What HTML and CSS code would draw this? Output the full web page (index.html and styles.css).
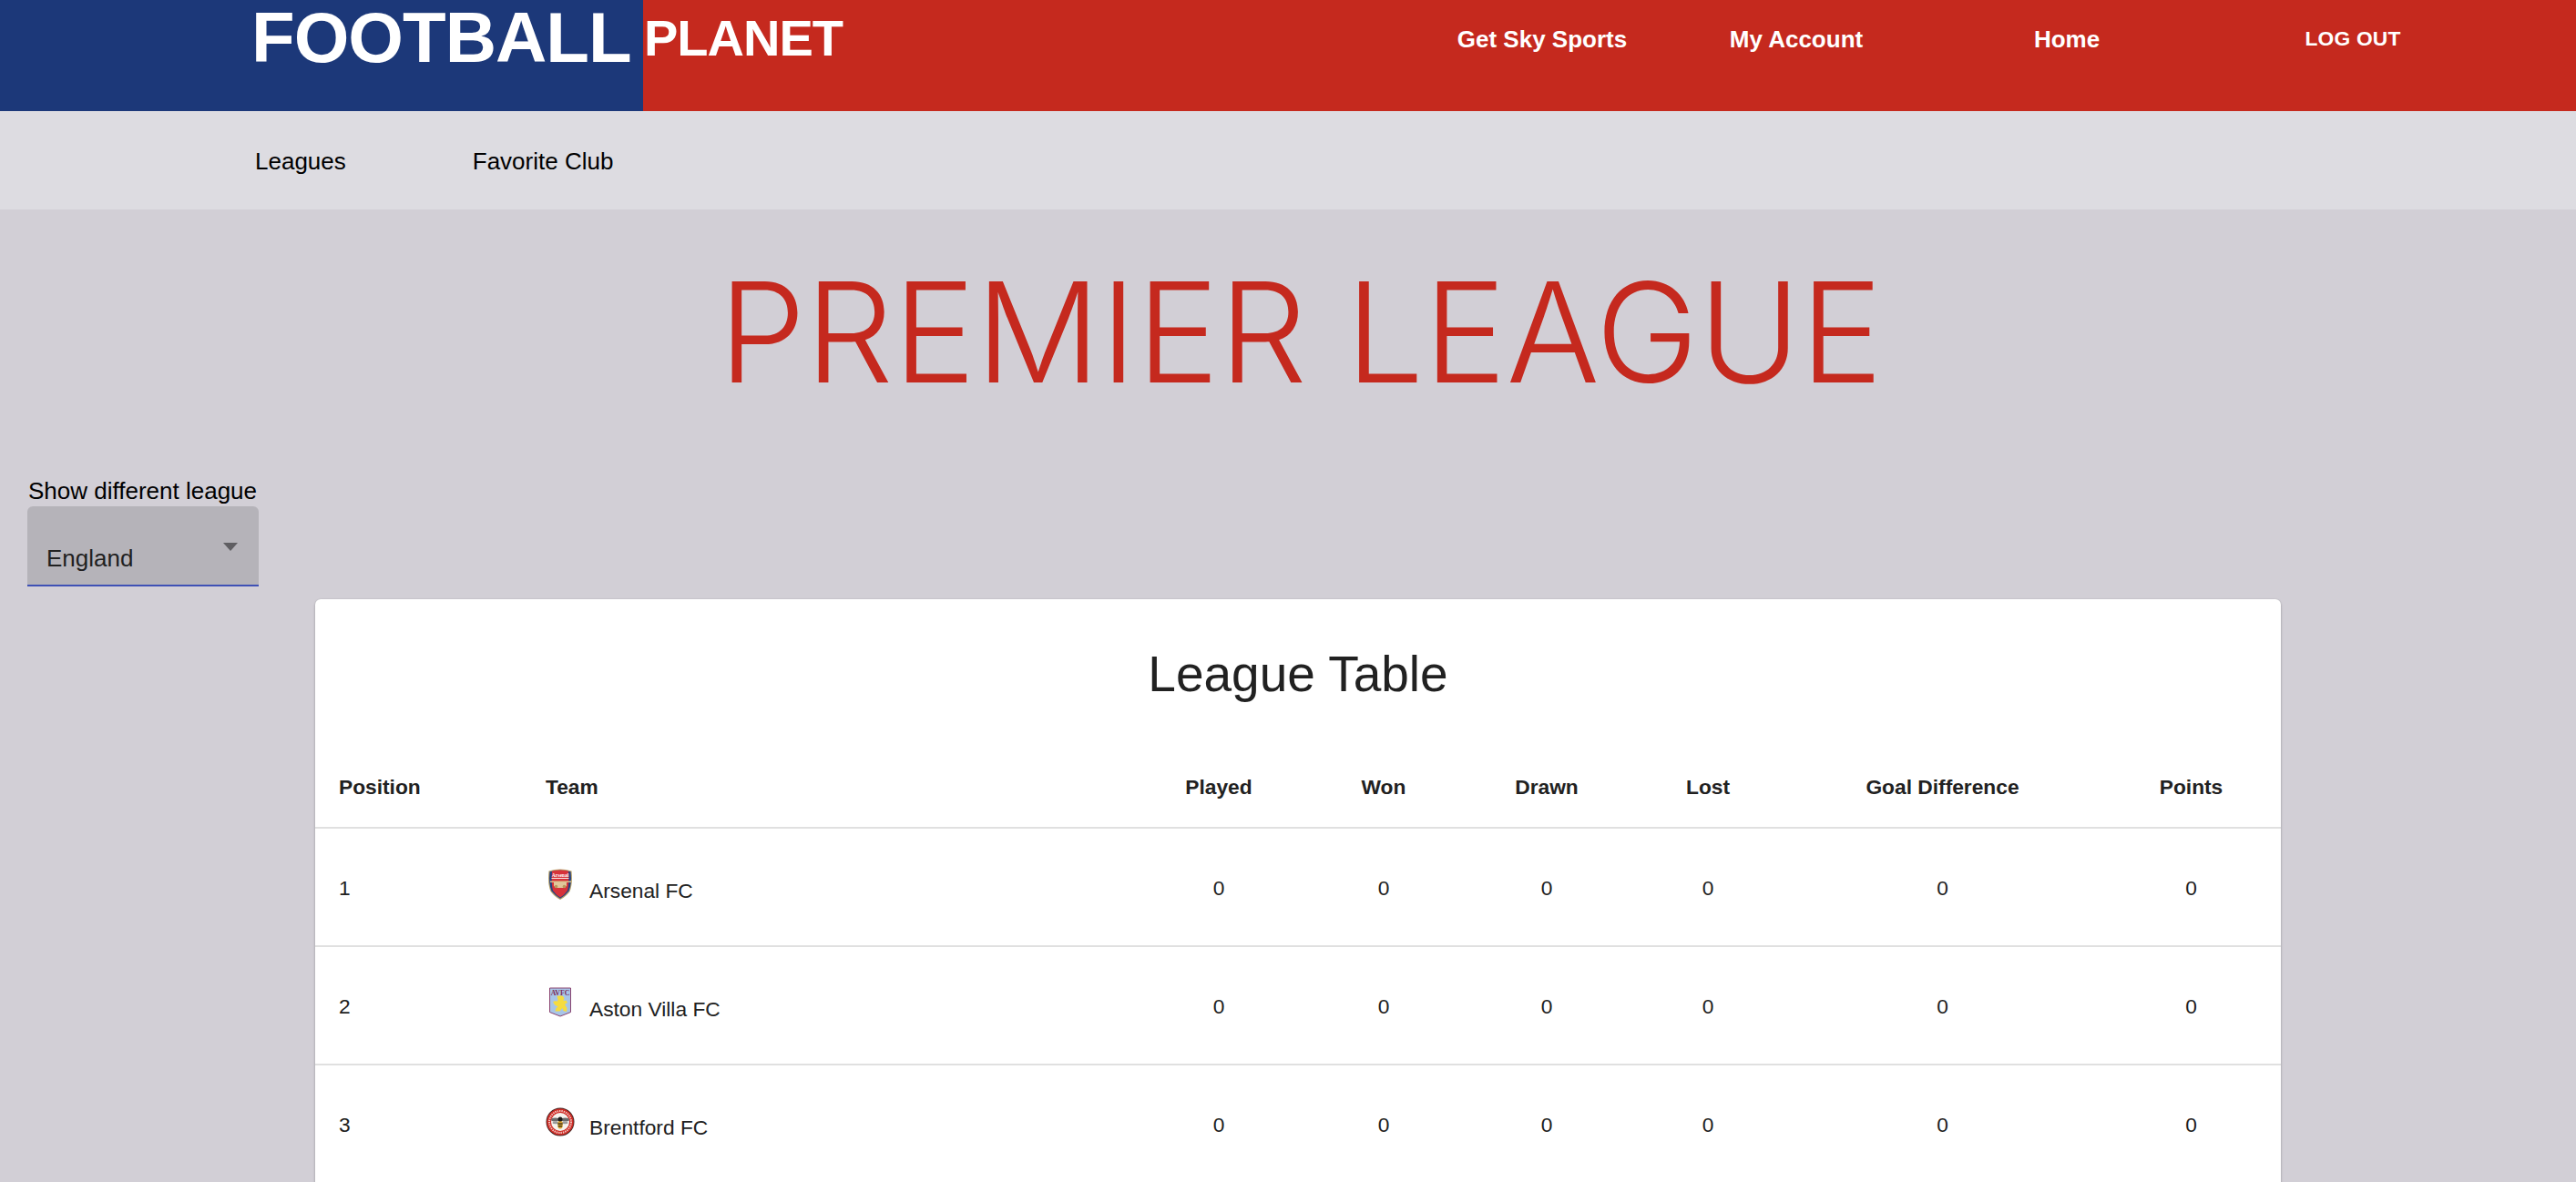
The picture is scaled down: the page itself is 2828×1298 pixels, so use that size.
FILE: index.html
```html
<!DOCTYPE html>
<html lang="en">
<head>
<meta charset="utf-8">
<title>Football Planet</title>
<link rel="stylesheet" href="styles.css">
</head>
<body>
<header class="topbar">
  <div class="brand-blue"><span class="brand-football">FOOTBALL</span></div>
  <div class="brand-red">
    <span class="brand-planet">PLANET</span>
    <nav class="mainnav">
      <a class="navitem navitem-a">Get Sky Sports</a>
      <a class="navitem navitem-b">My Account</a>
      <a class="navitem navitem-c">Home</a>
      <a class="navitem navitem-d logout">LOG OUT</a>
    </nav>
  </div>
</header>
<nav class="subnav">
  <a class="sublink sublink-a">Leagues</a>
  <a class="sublink">Favorite Club</a>
</nav>
<main class="content">
  <h1 class="page-title">PREMIER LEAGUE</h1>
  <div class="league-select">
    <div class="select-label">Show different league</div>
    <div class="select-box">
      <span class="select-value">England</span>
      <span class="select-arrow"></span>
    </div>
  </div>
  <section class="card">
    <h2 class="card-title">League Table</h2>
    <table class="table">
      <colgroup>
        <col class="c-pos"><col class="c-team"><col class="c-played"><col class="c-won">
        <col class="c-drawn"><col class="c-lost"><col class="c-gd"><col class="c-pts">
      </colgroup>
      <thead>
        <tr>
          <th class="left">Position</th><th class="left">Team</th><th>Played</th><th>Won</th>
          <th>Drawn</th><th>Lost</th><th>Goal Difference</th><th>Points</th>
        </tr>
      </thead>
      <tbody>
        <tr>
          <td class="left">1</td>
          <td class="left"><div class="team">
            <svg class="crest" viewBox="0 0 32 36" aria-hidden="true">
              <path d="M3.500 3.500Q16 -0.500 28.500 3.500Q30 18 26.500 26Q22 32 16 35Q10 32 5.500 26Q2 18 3.500 3.500Z" fill="#b8a26a"/>
              <path d="M4.500 4.300Q16 1 27.500 4.300Q29 18 25.500 25.500Q21 31 16 33.800Q11 31 6.500 25.500Q3 18 4.500 4.300Z" fill="#27407f"/>
              <path d="M7 3.600Q16 1.600 25 3.600Q26 18 24 25Q20 30.500 16 32.600Q12 30.500 8 25Q6 18 7 3.600Z" fill="#d6333a"/>
              <text x="16" y="10" class="crest-text-a">Arsenal</text>
              <rect x="6.500" y="11" width="19" height="1" fill="#f7ece6"/>
              <rect x="5" y="14.500" width="23" height="1.500" fill="#d9c68e"/>
              <path d="M9 16h14v3.500l-2 2.500H11l-2-2.500Z" fill="#e2c79b"/>
              <circle cx="11.500" cy="20.500" r="1.800" fill="#b79a5c"/><circle cx="20.500" cy="20.500" r="1.800" fill="#b79a5c"/>
            </svg>
            <span class="team-name">Arsenal FC</span>
          </div></td>
          <td>0</td><td>0</td><td>0</td><td>0</td><td>0</td><td>0</td>
        </tr>
        <tr>
          <td class="left">2</td>
          <td class="left"><div class="team">
            <svg class="crest" viewBox="0 0 32 36" aria-hidden="true">
              <path d="M4.500 2H27.500V28.500L16 33L4.500 28.500Z" fill="#a8c6e8" stroke="#8a4470" stroke-width="1"/>
              <text x="16" y="9.500" class="crest-text-b">AVFC</text>
              <path d="M13.500 10.500h5l2 2.500-1 3 3-.5 1.500 2.500-3 2 2.500 4-.5 4-3.500-1-1-3-3 3.500-5 0 1-3.500 2-1.500-3.500-2-2-3.500 3.500-1 1 1 1-2-1-4Z" fill="#f6dc3f"/>
            </svg>
            <span class="team-name">Aston Villa FC</span>
          </div></td>
          <td>0</td><td>0</td><td>0</td><td>0</td><td>0</td><td>0</td>
        </tr>
        <tr>
          <td class="left">3</td>
          <td class="left"><div class="team">
            <svg class="crest" viewBox="0 0 32 32" aria-hidden="true">
              <circle cx="16" cy="16" r="15.500" fill="#4a2a28"/>
              <circle cx="16" cy="16" r="14.600" fill="#cf2a24"/>
              <circle cx="16" cy="16" r="12" fill="none" stroke="#f0c9c4" stroke-width="2" stroke-dasharray="1.400 1"/>
              <circle cx="16" cy="16" r="10" fill="#f6f3ee"/>
              <ellipse cx="10.500" cy="13.500" rx="4.500" ry="2" fill="#6a6a6a"/>
              <ellipse cx="21.500" cy="13.500" rx="4.500" ry="2" fill="#6a6a6a"/>
              <ellipse cx="11" cy="17" rx="3.500" ry="1.200" fill="#9a9a9a"/>
              <ellipse cx="21" cy="17" rx="3.500" ry="1.200" fill="#9a9a9a"/>
              <ellipse cx="16" cy="19" rx="2.800" ry="4.500" fill="#dca52c"/>
              <circle cx="16" cy="13" r="2.500" fill="#1a1a1a"/>
              <rect x="13.400" y="17.500" width="5.200" height="1.200" fill="#1a1a1a"/>
              <rect x="13.800" y="20.200" width="4.400" height="1.100" fill="#1a1a1a"/>
            </svg>
            <span class="team-name">Brentford FC</span>
          </div></td>
          <td>0</td><td>0</td><td>0</td><td>0</td><td>0</td><td>0</td>
        </tr>
      </tbody>
    </table>
  </section>
</main>
</body>
</html>
```

FILE: styles.css
```css
* { box-sizing: border-box; }
html, body { margin: 0; height: 100%; overflow: hidden; }
body {
  background: #d2cfd6;
  color: #000;
  font-family: "Liberation Sans", Arial, sans-serif;
}

.topbar { display: flex; height: 122px; background: #c5291e; color: #fff; font-weight: 700; }
.brand-blue { width: 706px; background: #1c3879; padding-left: 276px; }
.brand-football { display: block; font-size: 78px; line-height: 82px; letter-spacing: -1px; }
.brand-red { flex: 1; display: flex; }
.brand-planet { display: block; font-size: 56px; line-height: 84px; padding-left: 1px; letter-spacing: -1px; }
.mainnav { margin-left: auto; display: flex; padding-right: 88px; padding-top: 28px; }
.navitem { display: block; font-size: 26px; line-height: 30px; text-align: center; }
.navitem-a { width: 278px; }
.navitem-b { width: 280px; }
.navitem-c { width: 314px; }
.navitem-d { width: 314px; }
.logout { font-size: 22.75px; line-height: 28px; letter-spacing: 0.2px; }

.subnav { display: flex; align-items: center; height: 108px; background: #dddce1; padding: 2px 0 0 280px; font-size: 26px; }
.sublink { display: block; }
.sublink-a { margin-right: 139px; }

.content { display: flex; flex-direction: column; }
.page-title {
  margin: 0;
  padding: 45px 0 0 28px;
  text-align: center;
  font-family: Inter, "Liberation Sans", sans-serif;
  font-weight: 300;
  font-size: 152px;
  line-height: 180px;
  color: #c5291e;
}
.league-select { padding: 69px 0 0 30px; width: 300px; }
.select-label { font-size: 26px; line-height: 30px; white-space: nowrap; padding-left: 1px; }
.select-box {
  position: relative;
  width: 254px;
  height: 88px;
  margin-top: 2px;
  background: #b5b3b9;
  border-radius: 6px 6px 0 0;
  border-bottom: 2px solid #3f51b5;
  padding: 41px 0 0 21px;
  color: #212121;
  font-size: 26px;
  line-height: 32px;
}
.select-value { display: block; }
.select-arrow {
  position: absolute;
  right: 23px;
  top: 40px;
  width: 0;
  height: 0;
  border-left: 8px solid transparent;
  border-right: 8px solid transparent;
  border-top: 9px solid #5f5e62;
}

.card {
  width: 2158px;
  margin: 14px 0 0 346px;
  padding-bottom: 40px;
  background: #fff;
  border-radius: 6px;
  box-shadow: 0 2px 3px rgba(0, 0, 0, 0.2), 0 0 2px rgba(0, 0, 0, 0.15);
  overflow: hidden;
}
.card-title {
  margin: 0;
  height: 162px;
  padding-top: 41px;
  text-align: center;
  font-size: 55px;
  line-height: 82px;
  font-weight: 400;
  color: #212121;
}
.table { width: 100%; border-collapse: collapse; table-layout: fixed; color: #212121; font-size: 22.75px; }
.c-pos { width: 227px; }
.c-team { width: 669px; }
.c-played { width: 192px; }
.c-won { width: 170px; }
.c-drawn { width: 188px; }
.c-lost { width: 166px; }
.c-gd { width: 349px; }
.c-pts { width: 197px; }
th, td { padding: 0 26px; text-align: center; border-bottom: 2px solid #e0e0e0; }
th { height: 89px; font-weight: 700; }
td { height: 130px; padding-top: 2px; }
tbody tr:last-child td { border-bottom: 0; }
th.left, td.left { text-align: left; }
.team { display: flex; align-items: center; }
.crest { display: block; width: 32px; height: 36px; flex: none; margin-top: -8px; }
.team-name { margin-left: 16px; padding-top: 6px; }
.crest-text-a { font-size: 5.500px; font-weight: 700; fill: #fff; text-anchor: middle; font-family: "Liberation Serif", serif; }
.crest-text-b { font-size: 7.800px; font-weight: 700; fill: #7b2a56; text-anchor: middle; font-family: "Liberation Serif", serif; }
```
